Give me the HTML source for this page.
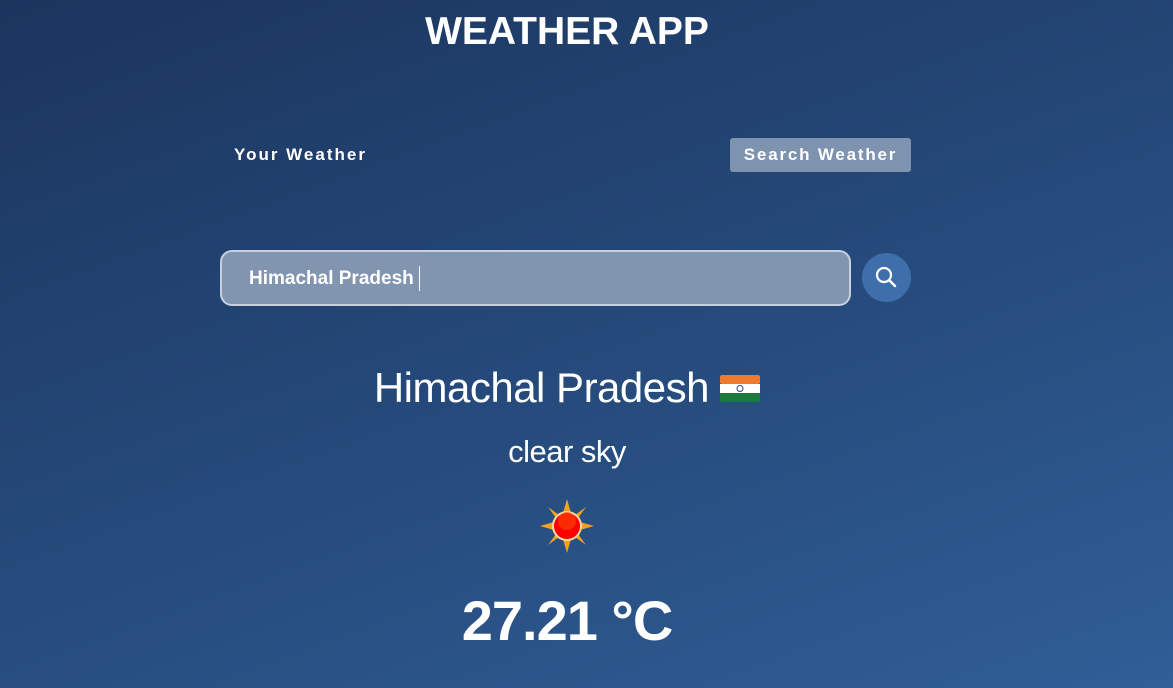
<!DOCTYPE html>
<html><head><style>
html,body{margin:0;padding:0;width:1173px;height:688px;overflow:hidden}
body{background:linear-gradient(160deg,#1b355d 0%,#25497a 50%,#305e96 100%);font-family:"Liberation Sans",sans-serif;color:#fff;position:relative}
.t{position:absolute;left:0;width:1134px;top:10px;text-align:center;font-weight:bold;font-size:39px;letter-spacing:0}
.yw{position:absolute;left:234px;top:145px;font-size:17px;font-weight:bold;letter-spacing:2px}
.sw{position:absolute;left:730px;top:138px;width:181px;height:34px;background:#7e93b0;border-radius:3px;font-size:17px;font-weight:bold;letter-spacing:1.8px;text-align:center;line-height:34px}
.in{position:absolute;left:220px;top:250px;width:627px;height:52px;border:2px solid #c6d0df;border-radius:12px;background:#8194b0;box-sizing:content-box}
.in span{position:absolute;left:27px;top:16px;font-size:19px;font-weight:bold;letter-spacing:0}
.in i{position:absolute;left:197px;top:14px;width:1px;height:25px;background:#fff}
.btn{position:absolute;left:862px;top:253px;width:49px;height:49px;border-radius:50%;background:#3f6faa}
.city{position:absolute;left:0;width:1134px;top:364px;text-align:center;font-size:42px;letter-spacing:-0.5px}
.sky{position:absolute;left:0;width:1134px;top:434px;text-align:center;font-size:31px;letter-spacing:-0.5px}
.temp{position:absolute;left:0;width:1134px;top:588px;text-align:center;font-size:56px;font-weight:bold;letter-spacing:-1px}
</style></head><body>
<div class="t">WEATHER APP</div>
<div class="yw">Your Weather</div>
<div class="sw">Search Weather</div>
<div class="in"><span>Himachal Pradesh</span><i></i></div>
<div class="btn"><svg width="49" height="49" viewBox="0 0 49 49"><circle cx="22" cy="22" r="7" fill="none" stroke="#fff" stroke-width="2.2"/><path d="M27 27 L33 33" stroke="#fff" stroke-width="2.4" stroke-linecap="round"/></svg></div>
<div class="city">Himachal Pradesh <svg width="40" height="32" viewBox="0 0 40 32" style="vertical-align:-2px"><rect x="0" y="3" width="40" height="9" rx="2" fill="#f07b2f"/><rect x="0" y="12" width="40" height="9" fill="#fff"/><rect x="0" y="21" width="40" height="9" rx="2" fill="#1c7a3a"/><circle cx="20" cy="16.5" r="3" fill="none" stroke="#2a3f8f" stroke-width="1"/></svg></div>
<div class="sky">clear sky</div>
<svg style="position:absolute;left:540px;top:499px" width="54" height="54" viewBox="0 0 54 54">
<g fill="#f4a21c"><polygon points="27,0 31,14 23,14"/><polygon points="27,54 31,40 23,40"/><polygon points="0,27 14,23 14,31"/><polygon points="54,27 40,23 40,31"/><polygon points="8,8 19,16 16,19"/><polygon points="46,46 35,38 38,35"/><polygon points="46,8 38,19 35,16"/><polygon points="8,46 16,35 19,38"/></g>
<circle cx="27" cy="27" r="15" fill="#ffd9a0"/><circle cx="27" cy="27" r="13" fill="#f00"/><circle cx="27" cy="22" r="9" fill="#f44a00" opacity=".6"/></svg>
<div class="temp">27.21 °C</div>
</body></html>
